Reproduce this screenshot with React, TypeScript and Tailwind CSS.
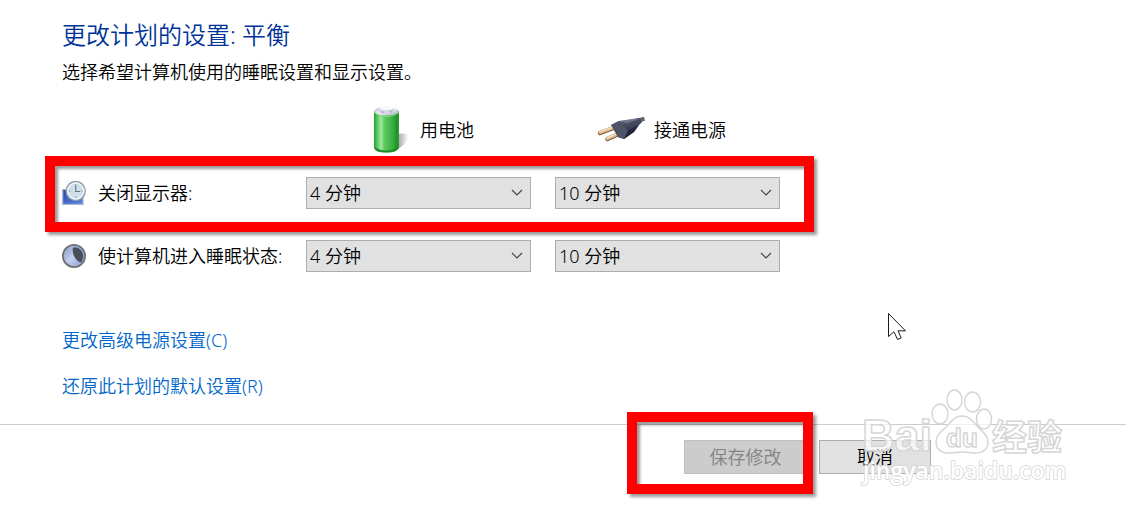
import React from "react";

const DURATIONS = ["1 分钟", "2 分钟", "3 分钟", "4 分钟", "5 分钟", "10 分钟", "15 分钟", "从不"];

const BatteryIcon = () => (
  <svg className="h-12 w-10 shrink-0" viewBox="0 0 40 48" aria-hidden="true">
    <defs>
      <linearGradient id="battery-body" x1="0" x2="1" y1="0" y2="0">
        <stop offset="0" stopColor="#2a9a35" />
        <stop offset="0.1" stopColor="#4cc154" />
        <stop offset="0.28" stopColor="#a0e8a0" />
        <stop offset="0.42" stopColor="#5ccb60" />
        <stop offset="0.75" stopColor="#35b03d" />
        <stop offset="0.92" stopColor="#218f2b" />
        <stop offset="1" stopColor="#3a9a42" />
      </linearGradient>
      <linearGradient id="battery-shadow" x1="0" x2="1" y1="0" y2="0">
        <stop offset="0" stopColor="#8a8a8a" />
        <stop offset="1" stopColor="#8a8a8a" stopOpacity="0" />
      </linearGradient>
      <linearGradient id="battery-cap" x1="0" x2="1" y1="0" y2="1">
        <stop offset="0" stopColor="#b4bac0" />
        <stop offset="0.5" stopColor="#eef0f6" />
        <stop offset="1" stopColor="#9aa3ac" />
      </linearGradient>
    </defs>
    <path d="M25 29 Q33 26 38 28 Q40 34 31 41 L25 44Z" fill="url(#battery-shadow)" />
    <path d="M4 5 Q16 0 29 5 V42 Q27 46.5 16 46.5 Q5 46.5 4 42Z" fill="url(#battery-body)" />
    <path d="M4 41 Q5 46.5 16 46.5 Q27 46.5 29 41 Q22 44.5 16 44.5 Q10 44.5 4 41Z" fill="#238a2c" />
    <ellipse cx="16.5" cy="5.2" rx="12" ry="4.4" fill="url(#battery-cap)" />
    <path d="M4 6 Q8 10.5 16.5 10.5 Q25 10.5 29 6" fill="none" stroke="#7bd57e" strokeWidth="1" />
    <path d="M9 2.6 Q16 -1 24 2.6 L23 7 Q16 9 10 7Z" fill="#d6d8e8" />
    <ellipse cx="16.5" cy="2.2" rx="6.8" ry="2.1" fill="#f6f6fb" />
    <path d="M10.5 5 L12.5 8 L15 5.5Z M18 4.5 L21.5 7.6 L23 4Z" fill="#b3b8cc" />
  </svg>
);

const PlugIcon = () => (
  <svg className="h-8 w-12 shrink-0" viewBox="0 0 48 32" aria-hidden="true">
    <defs>
      <linearGradient id="plug-body" x1="0" x2="0.5" y1="0" y2="1">
        <stop offset="0" stopColor="#6d7188" />
        <stop offset="0.5" stopColor="#45485f" />
        <stop offset="1" stopColor="#202238" />
      </linearGradient>
    </defs>
    <path d="M41 6.5 L47.5 4.8" stroke="#60666c" strokeWidth="4" />
    <path d="M3 19 L18 13.5 M10.5 25 L25 18.5" stroke="#7a5a3c" strokeWidth="4.4" strokeLinecap="round" />
    <path d="M3 18.5 L18 13 M10.5 24.5 L25 18" stroke="#e2b98b" strokeWidth="3.2" strokeLinecap="round" />
    <path d="M3 17.8 L17 12.6 M10.5 23.8 L24 17.6" stroke="#fbe6cb" strokeWidth="1.2" strokeLinecap="round" />
    <path d="M14 11 L22 7 L36 5 Q39 4 43 4 L45 8 L42 11 L37 18 L27 25 L21 23Z" fill="url(#plug-body)" />
    <path d="M14 11 L22 7 L31 16.5 L27 25 L21 23 L18.5 15.5Z" fill="#505469" />
    <path d="M22 7 L36 5 L42 5 L30 9Z" fill="#8489a0" opacity="0.6" />
    <path d="M27 25 L37 18 L42 11 L31 16.5Z" fill="#1d2035" opacity="0.7" />
  </svg>
);

const DisplayClockIcon = () => (
  <svg className="h-6 w-6 shrink-0" viewBox="0 0 24 24" aria-hidden="true">
    <defs>
      <linearGradient id="clock-screen" x1="0" x2="1" y1="0" y2="1">
        <stop offset="0" stopColor="#2449b0" />
        <stop offset="1" stopColor="#5c86e0" />
      </linearGradient>
    </defs>
    <path d="M0.7 8.5 H21 V23.3 H0.7Z" fill="url(#clock-screen)" stroke="#a7b4cf" strokeWidth="1.2" />
    <circle cx="13.7" cy="10" r="9.6" fill="#dbe7ee" stroke="#8e9aa3" strokeWidth="1.2" />
    <circle cx="13.7" cy="10" r="7.8" fill="#cfe0ea" stroke="#f5fafc" strokeWidth="1" />
    <path d="M13.7 3 V5 M13.7 15 V17 M6.7 10 H8.7 M18.7 10 H20.7" stroke="#8fa2ae" strokeWidth="1" />
    <path d="M13.7 4.5 V10.5 H18" fill="none" stroke="#5f7480" strokeWidth="1.1" />
  </svg>
);

const MoonIcon = () => (
  <svg className="h-6 w-6 shrink-0" viewBox="0 0 24 24" aria-hidden="true">
    <defs>
      <linearGradient id="moon-face" x1="0" x2="1" y1="0" y2="1">
        <stop offset="0" stopColor="#7f93c4" />
        <stop offset="0.5" stopColor="#c3d0f2" />
        <stop offset="1" stopColor="#7c92cc" />
      </linearGradient>
    </defs>
    <circle cx="12" cy="12" r="11" fill="url(#moon-face)" stroke="#6e7175" strokeWidth="2" />
    <circle cx="12" cy="12" r="9.8" fill="none" stroke="#b4bac4" strokeWidth="0.8" />
    <path d="M11 3.5 C15 1.5 21.5 6 21.5 12 C21.5 16 20.5 17.5 18.5 18.5 C13.5 16.5 9.5 10 11 3.5Z" fill="#4a4e57" />
    <path d="M11 3.5 C15 1.5 21.5 6 21.5 12 C21.5 14 21 16 20 17.5" fill="none" stroke="#79a5dc" strokeWidth="1" />
  </svg>
);

const MousePointer = () => (
  <svg className="pointer-events-none absolute left-[888px] top-[313px] h-7 w-5" viewBox="0 0 20 28" aria-hidden="true">
    <path
      d="M0.5 0.5 V23.5 L6 18.8 L9.5 26.5 L13.2 24.8 L10 17.8 H17.5Z"
      fill="#fff"
      stroke="#1a1a26"
      strokeWidth="1"
    />
  </svg>
);

const Watermark = () => (
  <svg
    className="pointer-events-none absolute left-[856px] top-[384px] h-28 w-[216px] select-none"
    viewBox="0 0 216 112"
    aria-hidden="true"
  >
    <g fill="#fff" fillOpacity="0.7" stroke="#d6d6d6" strokeWidth="1.5" strokeLinejoin="round">
      <text x="6" y="67" className="font-['Liberation_Sans'] text-[45px] font-bold">
        Bai
      </text>
      <ellipse cx="84" cy="30" rx="8" ry="10" />
      <ellipse cx="98.5" cy="16" rx="7.5" ry="10" />
      <ellipse cx="116.5" cy="18" rx="8" ry="10" />
      <ellipse cx="128" cy="35" rx="7.5" ry="10" />
      <path d="M106 32 C115 32 118 39 123 44 C128 49 132 52 132 58 C132 65 127 69 120 69 C114 69 111 68 106 68 C101 68 98 69 92 69 C85 69 80 65 80 58 C80 51 85 48 90 43 C95 38 98 32 106 32Z" />
      <text x="90" y="63" className="font-['Liberation_Sans'] text-[26px] font-bold">
        du
      </text>
      <text x="136" y="66" className="font-['Noto_Sans_CJK_SC'] text-[35px] font-bold">
        经验
      </text>
    </g>
    <text
      x="7"
      y="95"
      fill="#fff"
      stroke="#d6d6d6"
      strokeWidth="1.6"
      paintOrder="stroke"
      className="font-['Open_Sans'] text-[23px] font-semibold"
    >
      jingyan.baidu.com
    </text>
  </svg>
);

const Highlight = ({ className }: { className: string }) => (
  <div
    className={`pointer-events-none absolute border-10 border-[#fe0000] shadow-[3px_3px_3px_rgba(0,0,0,0.4),inset_3px_3px_3px_rgba(0,0,0,0.4)] ${className}`}
  />
);

type DurationSelectProps = { label: string; initial: string };

const DurationSelect = ({ label, initial }: DurationSelectProps) => {
  const [value, setValue] = React.useState(initial);

  return (
    <div className="relative w-[225px]">
      <select
        aria-label={label}
        value={value}
        onChange={(event) => setValue(event.target.value)}
        className="block h-8 w-full appearance-none border border-[#adadad] bg-[#e1e1e1] pl-[3px] leading-6 text-black"
      >
        {DURATIONS.map((duration) => (
          <option key={duration}>{duration}</option>
        ))}
      </select>
      <svg className="pointer-events-none absolute right-2 top-3 h-2 w-3" viewBox="0 0 12 8" aria-hidden="true">
        <path d="M1 1 L6 6 L11 1" fill="none" stroke="#444" strokeWidth="1.2" />
      </svg>
    </div>
  );
};

type SettingRowProps = { icon: React.ReactNode; label: string; highlighted?: boolean };

const SettingRow = ({ icon, label, highlighted }: SettingRowProps) => (
  <div className="relative flex w-[718px] items-center">
    <div className="flex w-[244px] items-center gap-3">
      {icon}
      <span className="whitespace-nowrap">{label}</span>
    </div>
    <div className="flex gap-6">
      <DurationSelect label={`${label} 用电池`} initial="4 分钟" />
      <DurationSelect label={`${label} 接通电源`} initial="10 分钟" />
    </div>
    {highlighted && <Highlight className="-bottom-[23px] -left-[17px] -right-[34px] -top-[21px]" />}
  </div>
);

const App = () => (
  <div className="relative min-h-screen overflow-hidden bg-white font-['Noto_Sans','Noto_Sans_CJK_SC',sans-serif] text-lg leading-6 font-[350] text-black">
    <main className="px-[62px] pt-[19px]">
      <h1 className="text-2xl leading-8 text-[#003399]">更改计划的设置: 平衡</h1>
      <p className="mt-[9px]">选择希望计算机使用的睡眠设置和显示设置。</p>

      <div className="mt-5 flex h-[52px] items-center pl-[244px]">
        <div className="flex w-[249px] items-center gap-[10px] pl-16">
          <BatteryIcon />
          <span>用电池</span>
        </div>
        <div className="flex items-center gap-[9px] pl-[42px]">
          <PlugIcon />
          <span>接通电源</span>
        </div>
      </div>

      <div className="mt-[21px] flex flex-col gap-[31px]">
        <SettingRow icon={<DisplayClockIcon />} label="关闭显示器:" highlighted />
        <SettingRow icon={<MoonIcon />} label="使计算机进入睡眠状态:" />
      </div>

      <nav className="mt-14 flex flex-col items-start gap-[22px] text-[#0066cc]">
        <a href="#advanced">更改高级电源设置(C)</a>
        <a href="#restore">还原此计划的默认设置(R)</a>
      </nav>
    </main>

    <footer className="mt-[26px] flex justify-end gap-3 border-t border-[#cccccc] pr-[195px] pt-[15px]">
      <div className="relative">
        <button type="button" disabled className="h-[34px] w-[123px] border border-[#bfbfbf] bg-[#cccccc] text-[#838383]">
          保存修改
        </button>
        <Highlight className="-bottom-5 -left-[57px] -right-[6px] -top-7" />
      </div>
      <button type="button" className="h-[34px] w-28 border border-[#adadad] bg-[#e1e1e1]">
        取消
      </button>
    </footer>

    <MousePointer />
    <Watermark />
  </div>
);

export default App;
